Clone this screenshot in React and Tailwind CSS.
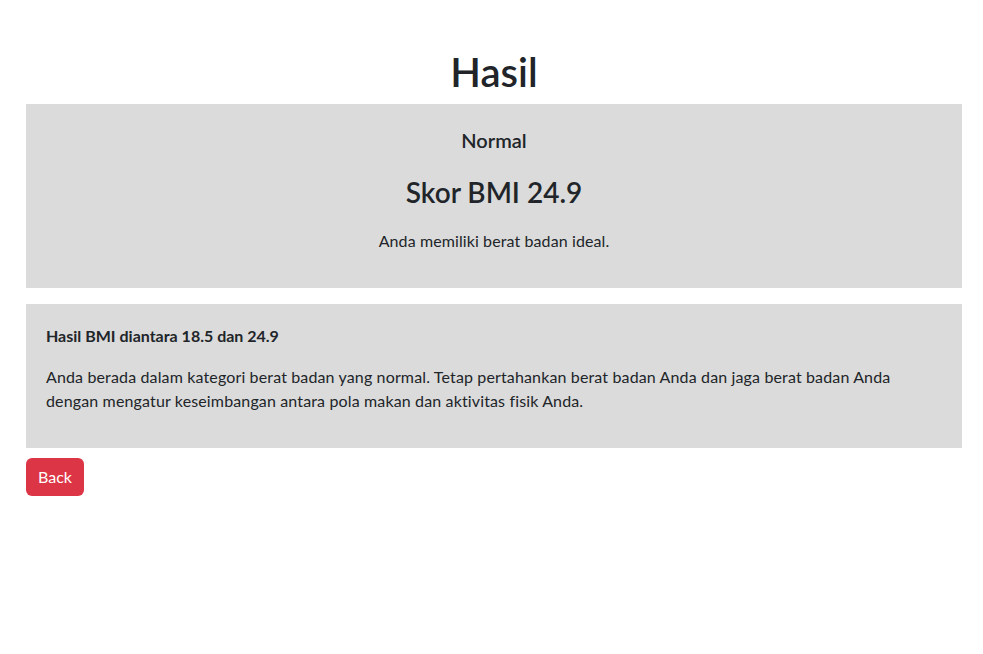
export default function App() {
  return (
    <div className="min-h-screen bg-white text-[#212529] font-['Lato','Liberation_Sans',sans-serif] text-base leading-6">
      <div className="px-[26px] pt-[48px] pb-8 w-[988px]">
        <h1 className="text-[40px] leading-[48px] font-semibold text-center mb-2">Hasil</h1>

        <div className="bg-[#dbdbdb] px-5 pt-[24px] pb-[35px] text-center">
          <h5 className="text-[20px] leading-6 font-semibold">Normal</h5>
          <h3 className="text-[28px] leading-[34px] font-semibold mt-[23px]">Skor BMI 24.9</h3>
          <p className="mt-5 tracking-[0.1px]">Anda memiliki berat badan ideal.</p>
        </div>

        <div className="bg-[#dbdbdb] mt-4 p-5 pb-[35px]">
          <h6 className="font-bold">Hasil BMI diantara 18.5 dan 24.9</h6>
          <p className="mt-[17px] tracking-[0.14px]">
            Anda berada dalam kategori berat badan yang normal. Tetap pertahankan berat badan Anda dan jaga berat badan Anda dengan mengatur keseimbangan antara pola makan dan aktivitas fisik Anda.
          </p>
        </div>

        <button className="mt-[10px] bg-[#dc3545] text-white rounded-md px-3 h-[38px] leading-6">
          Back
        </button>
      </div>
    </div>
  );
}
